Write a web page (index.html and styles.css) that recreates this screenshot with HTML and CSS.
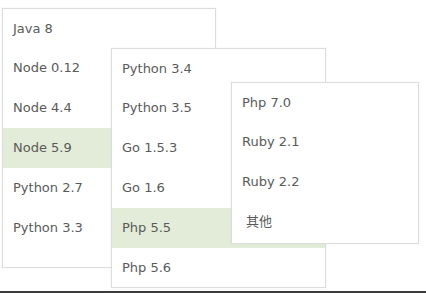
FILE: index.html
```html
<!DOCTYPE html>
<html>
<head>
<meta charset="utf-8">
<link rel="stylesheet" href="styles.css">
</head>
<body>
<div class="stage">
  <ul class="menu menu-1">
    <li class="item">Java 8</li>
    <li class="item">Node 0.12</li>
    <li class="item">Node 4.4</li>
    <li class="item active">Node 5.9</li>
    <li class="item">Python 2.7</li>
    <li class="item">Python 3.3</li>
  </ul>
  <ul class="menu menu-2">
    <li class="item">Python 3.4</li>
    <li class="item">Python 3.5</li>
    <li class="item">Go 1.5.3</li>
    <li class="item">Go 1.6</li>
    <li class="item active">Php 5.5</li>
    <li class="item">Php 5.6</li>
  </ul>
  <ul class="menu menu-3">
    <li class="item">Php 7.0</li>
    <li class="item">Ruby 2.1</li>
    <li class="item">Ruby 2.2</li>
    <li class="item cjk">其他</li>
  </ul>
</div>
</body>
</html>
```
FILE: styles.css
```css
html, body {
  margin: 0;
  padding: 0;
  background: #fff;
}
.stage {
  position: relative;
  height: 291px;
  border-bottom: 2px solid #3c3c3c;
  font-family: "DejaVu Sans", "Noto Sans CJK SC", sans-serif;
  font-size: 13px;
  color: #5a5a5a;
}
.menu {
  list-style: none;
  margin: 0;
  padding: 0;
  position: absolute;
  background: #fff;
  border: 1px solid #dcdcdc;
  box-sizing: border-box;
  box-shadow: 0 0 2px rgba(0,0,0,0.06);
}
.menu-1 {
  left: 2px;
  top: 8px;
  width: 214px;
  height: 260px;
  z-index: 1;
}
.menu-2 {
  left: 111px;
  top: 48px;
  width: 215px;
  height: 240px;
  z-index: 2;
}
.menu-3 {
  left: 231px;
  top: 82px;
  width: 188px;
  height: 162px;
  z-index: 3;
}
.item {
  height: 40px;
  line-height: 40px;
  padding-left: 10px;
  white-space: nowrap;
}
.menu-1 .item:first-child,
.menu-2 .item:first-child,
.menu-3 .item:first-child {
  height: 39px;
  line-height: 39px;
}
.item.active {
  background: #e3ecd8;
}
.item.cjk {
  padding-left: 14px;
}
```
